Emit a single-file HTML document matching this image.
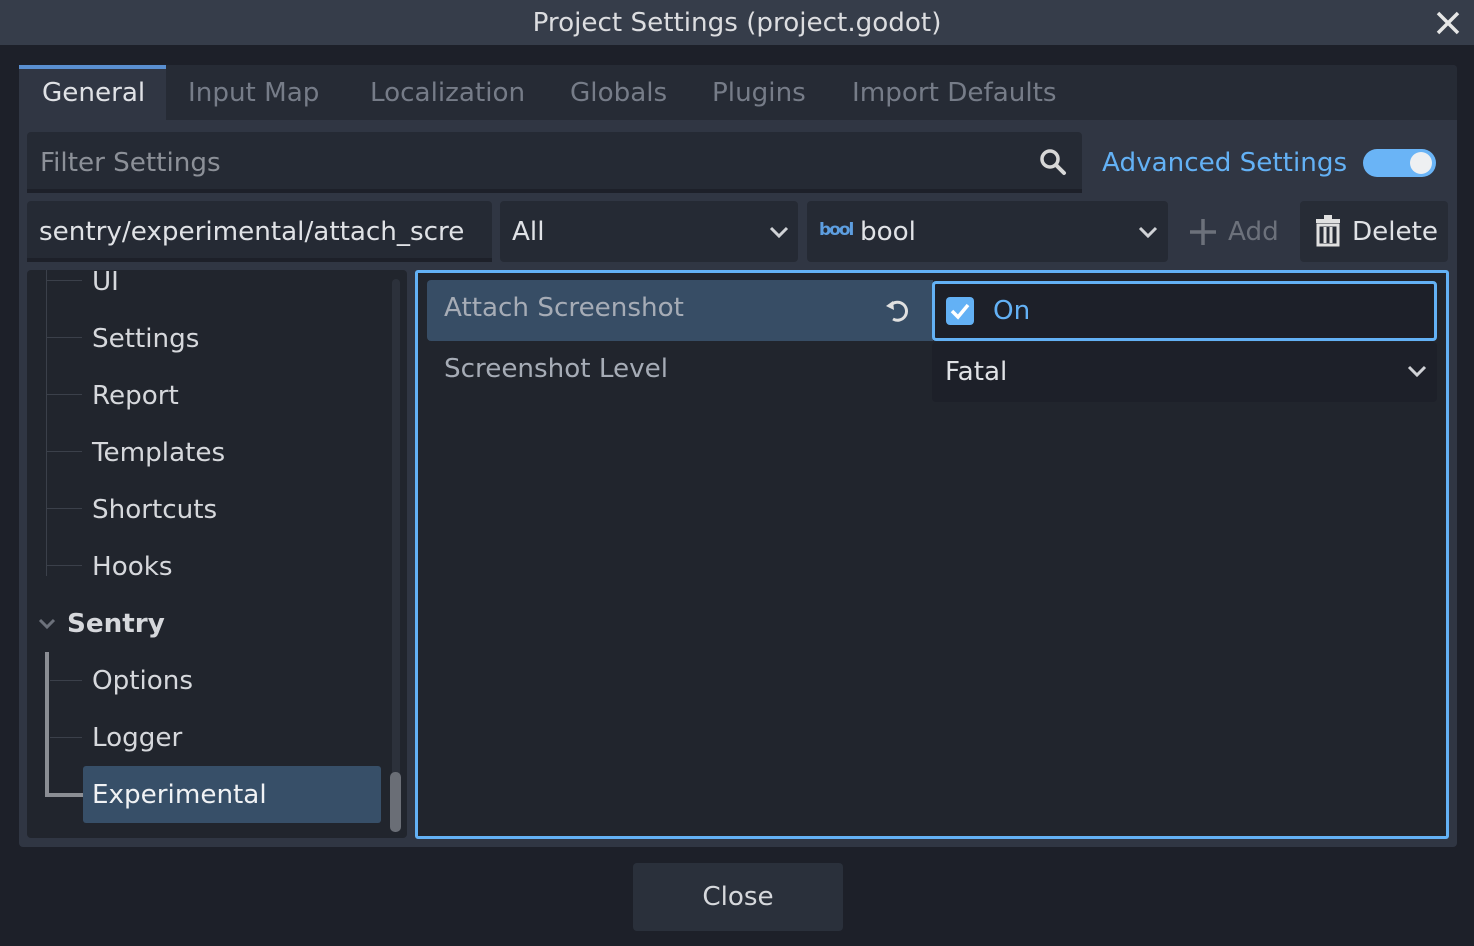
<!DOCTYPE html>
<html><head><meta charset="utf-8"><style>
*{margin:0;padding:0;box-sizing:border-box}
body{width:1474px;height:946px;background:#1d2029;font-family:"DejaVu Sans","Liberation Sans",sans-serif;color:#d6d8dc;position:relative;overflow:hidden}
.a{position:absolute}
.t{font-size:26.2px;white-space:nowrap;margin-top:2px}
</style></head><body>
<div class="a" style="left:0;top:0;width:1474px;height:45px;background:#363d4a"></div>
<div class="a t" style="left:0;width:1474px;top:6px;text-align:center;color:#dcdde0">Project Settings (project.godot)</div>
<svg class="a" style="left:1435px;top:10px" width="26" height="26"><path d="M3 3L23 23M23 3L3 23" stroke="#e6e6e6" stroke-width="3.5"/></svg>

<div class="a" style="left:19px;top:65px;width:1438px;height:782px;background:#303643;border-radius:4px"></div>
<div class="a" style="left:19px;top:65px;width:1438px;height:55px;background:#262b35;border-radius:4px 4px 0 0"></div>
<div class="a" style="left:19px;top:65px;width:147px;height:55px;background:#303643;border-top:4px solid #5a8fd0"></div>
<div class="a t" style="left:42px;top:76px;color:#e0e2e6">General</div>
<div class="a t" style="left:188px;top:76px;color:#767c88">Input Map</div>
<div class="a t" style="left:370px;top:76px;color:#767c88">Localization</div>
<div class="a t" style="left:570px;top:76px;color:#767c88">Globals</div>
<div class="a t" style="left:712px;top:76px;color:#767c88">Plugins</div>
<div class="a t" style="left:852px;top:76px;color:#767c88">Import Defaults</div>

<div class="a" style="left:27px;top:132px;width:1055px;height:61px;background:#252a34;border-bottom:4px solid #1d2029;border-radius:4px 4px 0 0"></div>
<div class="a t" style="left:40px;top:146px;color:#8c9098">Filter Settings</div>
<svg class="a" style="left:1038px;top:147px" width="30" height="30"><circle cx="12" cy="12" r="8" fill="none" stroke="#d8d8d8" stroke-width="3.5"/><path d="M18 18L26 26" stroke="#d8d8d8" stroke-width="4" stroke-linecap="round"/></svg>
<div class="a t" style="left:1102px;top:146px;color:#63b1f5">Advanced Settings</div>
<div class="a" style="left:1363px;top:149px;width:73px;height:28px;border-radius:14px;background:#6ab4f6"></div>
<div class="a" style="left:1410px;top:152px;width:22px;height:22px;border-radius:11px;background:#eef0f2"></div>

<div class="a" style="left:27px;top:201px;width:465px;height:61px;background:#252a34;border-bottom:4px solid #1d2029;border-radius:4px 4px 0 0"></div>
<div class="a t" style="left:39px;top:215px;color:#e0e2e6">sentry/experimental/attach_scre</div>
<div class="a" style="left:500px;top:201px;width:298px;height:61px;background:#252a34;border-radius:4px"></div>
<div class="a t" style="left:512px;top:215px;color:#e0e2e6">All</div>
<svg class="a" style="left:768px;top:224px" width="22" height="16"><path d="M3 4L11 12L19 4" fill="none" stroke="#d0d2d6" stroke-width="3"/></svg>
<div class="a" style="left:807px;top:201px;width:361px;height:61px;background:#252a34;border-radius:4px"></div>
<div class="a" style="left:819px;top:220px;font-size:17px;font-weight:bold;color:#5d9ee0;letter-spacing:-2px">bool</div>
<div class="a t" style="left:860px;top:215px;color:#e0e2e6">bool</div>
<svg class="a" style="left:1137px;top:224px" width="22" height="16"><path d="M3 4L11 12L19 4" fill="none" stroke="#d0d2d6" stroke-width="3"/></svg>
<svg class="a" style="left:1188px;top:217px" width="30" height="30"><path d="M15 2V28M2 15H28" stroke="#6c717b" stroke-width="3.5"/></svg>
<div class="a t" style="left:1228px;top:215px;color:#6c717b">Add</div>
<div class="a" style="left:1300px;top:201px;width:148px;height:61px;background:#272c36;border-radius:4px"></div>
<svg class="a" style="left:1314px;top:215px" width="28" height="32"><rect x="2" y="4" width="24" height="4" fill="#e0e0e0"/><rect x="10" y="0" width="8" height="4" fill="#e0e0e0"/><path d="M4 10H24V30H4Z" fill="none" stroke="#e0e0e0" stroke-width="3"/><path d="M11 12V28M17 12V28" stroke="#e0e0e0" stroke-width="3"/></svg>
<div class="a t" style="left:1352px;top:215px;color:#e0e2e6">Delete</div>

<div class="a" style="left:27px;top:270px;width:380px;height:568px;background:#21252d;border-radius:4px"></div>
<div class="a" style="left:392px;top:279px;width:8px;height:552px;background:#2c313b;border-radius:4px"></div>
<div class="a" style="left:390px;top:772px;width:11px;height:60px;background:#6a6e76;border-radius:5px"></div>
<div class="a" style="left:46px;top:270px;width:1px;height:306px;background:#3b404a"></div>
<div class="a" style="left:46px;top:280px;width:36px;height:1px;background:#3b404a"></div>
<div class="a" style="left:46px;top:337px;width:36px;height:1px;background:#3b404a"></div>
<div class="a" style="left:46px;top:394px;width:36px;height:1px;background:#3b404a"></div>
<div class="a" style="left:46px;top:451px;width:36px;height:1px;background:#3b404a"></div>
<div class="a" style="left:46px;top:508px;width:36px;height:1px;background:#3b404a"></div>
<div class="a" style="left:46px;top:565px;width:36px;height:1px;background:#3b404a"></div>
<div class="a t" style="left:92px;top:265px">UI</div>
<div class="a t" style="left:92px;top:322px">Settings</div>
<div class="a t" style="left:92px;top:379px">Report</div>
<div class="a t" style="left:92px;top:436px">Templates</div>
<div class="a t" style="left:92px;top:493px">Shortcuts</div>
<div class="a t" style="left:92px;top:550px">Hooks</div>
<svg class="a" style="left:38px;top:617px" width="18" height="14"><path d="M2 3L9 10L16 3" fill="none" stroke="#6c717b" stroke-width="3"/></svg>
<div class="a t" style="left:67px;top:607px;font-weight:bold">Sentry</div>
<div class="a" style="left:45px;top:652px;width:4px;height:145px;background:#8b8e94"></div>
<div class="a" style="left:45px;top:793px;width:38px;height:4px;background:#8b8e94"></div>
<div class="a" style="left:50px;top:680px;width:32px;height:1px;background:#3b404a"></div>
<div class="a" style="left:50px;top:737px;width:32px;height:1px;background:#3b404a"></div>
<div class="a t" style="left:92px;top:664px">Options</div>
<div class="a t" style="left:92px;top:721px">Logger</div>
<div class="a" style="left:83px;top:766px;width:298px;height:57px;background:#374f68;border-radius:3px"></div>
<div class="a t" style="left:92px;top:778px;color:#f0f2f4">Experimental</div>

<div class="a" style="left:415px;top:270px;width:1034px;height:569px;background:#21252d;border:3px solid #63b1f5;border-radius:3px"></div>
<div class="a" style="left:427px;top:280px;width:506px;height:61px;background:#374d65;border-radius:4px 0 0 4px"></div>
<div class="a t" style="left:444px;top:291px;color:#a6acb6">Attach Screenshot</div>
<svg class="a" style="left:884px;top:297px" width="28" height="28"><path d="M7 8A9 9 0 1 1 9 22" fill="none" stroke="#e0e0e0" stroke-width="3"/><path d="M2 9L9 4L10 13Z" fill="#e0e0e0"/></svg>
<div class="a" style="left:932px;top:281px;width:505px;height:60px;background:#1d2029;border:3px solid #63b1f5;border-radius:4px"></div>
<div class="a" style="left:946px;top:297px;width:28px;height:28px;background:#63b1f5;border-radius:4px"></div>
<svg class="a" style="left:946px;top:297px" width="28" height="28"><path d="M6 14L12 20L22 8" fill="none" stroke="#fff" stroke-width="3.5"/></svg>
<div class="a t" style="left:993px;top:294px;color:#63b1f5">On</div>
<div class="a t" style="left:444px;top:352px;color:#a6acb6">Screenshot Level</div>
<div class="a" style="left:932px;top:342px;width:505px;height:60px;background:#1d2029;border-radius:4px"></div>
<div class="a t" style="left:945px;top:355px;color:#e0e2e6">Fatal</div>
<svg class="a" style="left:1406px;top:363px" width="22" height="16"><path d="M3 4L11 12L19 4" fill="none" stroke="#d0d2d6" stroke-width="3"/></svg>

<div class="a" style="left:633px;top:863px;width:210px;height:68px;background:#2a303b;border-radius:4px"></div>
<div class="a t" style="left:633px;width:210px;top:880px;text-align:center;color:#d6d8dc">Close</div>
</body></html>
